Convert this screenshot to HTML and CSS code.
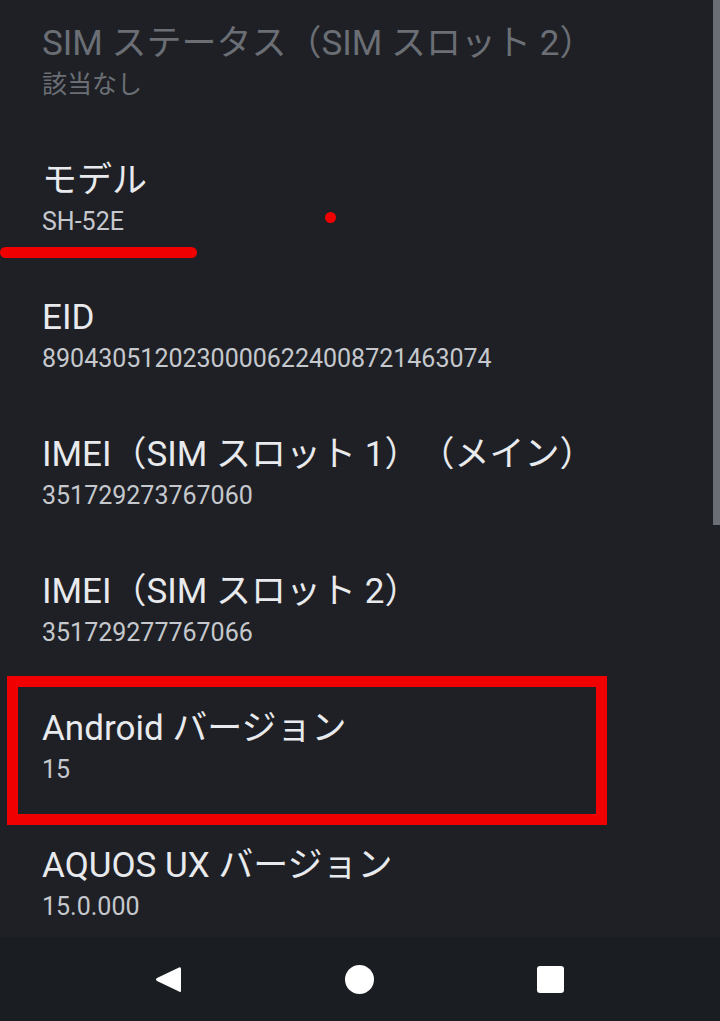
FILE: index.html
```html
<html>
<head>
<link rel="stylesheet" href="styles.css">
</head>

<body>
	<div class="screen">
		<div class="list">
			<div class="row disabled">
				<p class="title">SIM ステータス（SIM スロット 2）</p>
				<p class="summary">該当なし</p>
			</div>
			<div class="row">
				<p class="title">モデル</p>
				<p class="summary">SH-52E</p>
			</div>
			<div class="row">
				<p class="title">EID</p>
				<p class="summary">89043051202300006224008721463074</p>
			</div>
			<div class="row">
				<p class="title">IMEI（SIM スロット 1）（メイン）</p>
				<p class="summary">351729273767060</p>
			</div>
			<div class="row">
				<p class="title">IMEI（SIM スロット 2）</p>
				<p class="summary">351729277767066</p>
			</div>
			<div class="row">
				<p class="title">Android バージョン</p>
				<p class="summary">15</p>
			</div>
			<div class="row">
				<p class="title">AQUOS UX バージョン</p>
				<p class="summary">15.0.000</p>
			</div>
		</div>
		<div class="scrollbar"></div>

		<!-- red marks drawn over the screenshot -->
		<div class="mark-line"></div>
		<div class="mark-dot"></div>
		<div class="mark-box"></div>
	</div>

	<div class="navbar">
		<svg class="nav-icon" width="28" height="29" viewBox="0 0 28 29">
			<path d="M25 2.5 Q27 1.5 27 4 L27 25.5 Q27 28 25 26.5 L3 16 Q1 14.5 3 13 Z" fill="#fff"/>
		</svg>
		<svg class="nav-icon" width="29" height="29" viewBox="0 0 29 29">
			<circle cx="14.5" cy="14.5" r="14.5" fill="#fff"/>
		</svg>
		<svg class="nav-icon" width="27" height="27" viewBox="0 0 27 27">
			<rect x="0" y="0" width="27" height="27" rx="3" fill="#fff"/>
		</svg>
	</div>
</body>
</html>
```

FILE: styles.css
```css
body {
	margin: 0;
	background-color: #1e2025;
	font-family: Roboto, "Noto Sans CJK JP", sans-serif;
	overflow: hidden;
}

.screen {
	position: relative;
	height: 937px;
	overflow: hidden;
}

.list {
	margin-top: -6px;
}

.row {
	height: 137px;
	padding: 30px 43px 0 42px;
	box-sizing: border-box;
}

.title {
	margin: 0;
	font-size: 35px;
	line-height: 40px;
	color: #e8eaed;
	white-space: nowrap;
	text-spacing-trim: space-all;
}

.summary {
	margin: 3px 0 0 0;
	font-size: 25px;
	line-height: 36px;
	color: #c5c8cd;
	white-space: nowrap;
}

.disabled .title,
.disabled .summary {
	color: #6b6f75;
}

.scrollbar {
	position: absolute;
	top: 0;
	right: 0;
	width: 7px;
	height: 525px;
	background-color: #6b6e75;
}

.mark-line {
	position: absolute;
	left: 0;
	top: 247px;
	width: 197px;
	height: 11px;
	border-radius: 6px;
	background-color: #f00000;
}

.mark-dot {
	position: absolute;
	left: 325px;
	top: 212px;
	width: 11px;
	height: 11px;
	border-radius: 50%;
	background-color: #f00000;
}

.mark-box {
	position: absolute;
	left: 7px;
	top: 676px;
	width: 578px;
	height: 127px;
	border: 11px solid #f00000;
}

.navbar {
	height: 84px;
	background-color: #1a1d21;
	display: flex;
	justify-content: center;
	align-items: center;
	gap: 163px;
	padding-right: 2px;
}

.nav-icon {
	display: block;
}
```
